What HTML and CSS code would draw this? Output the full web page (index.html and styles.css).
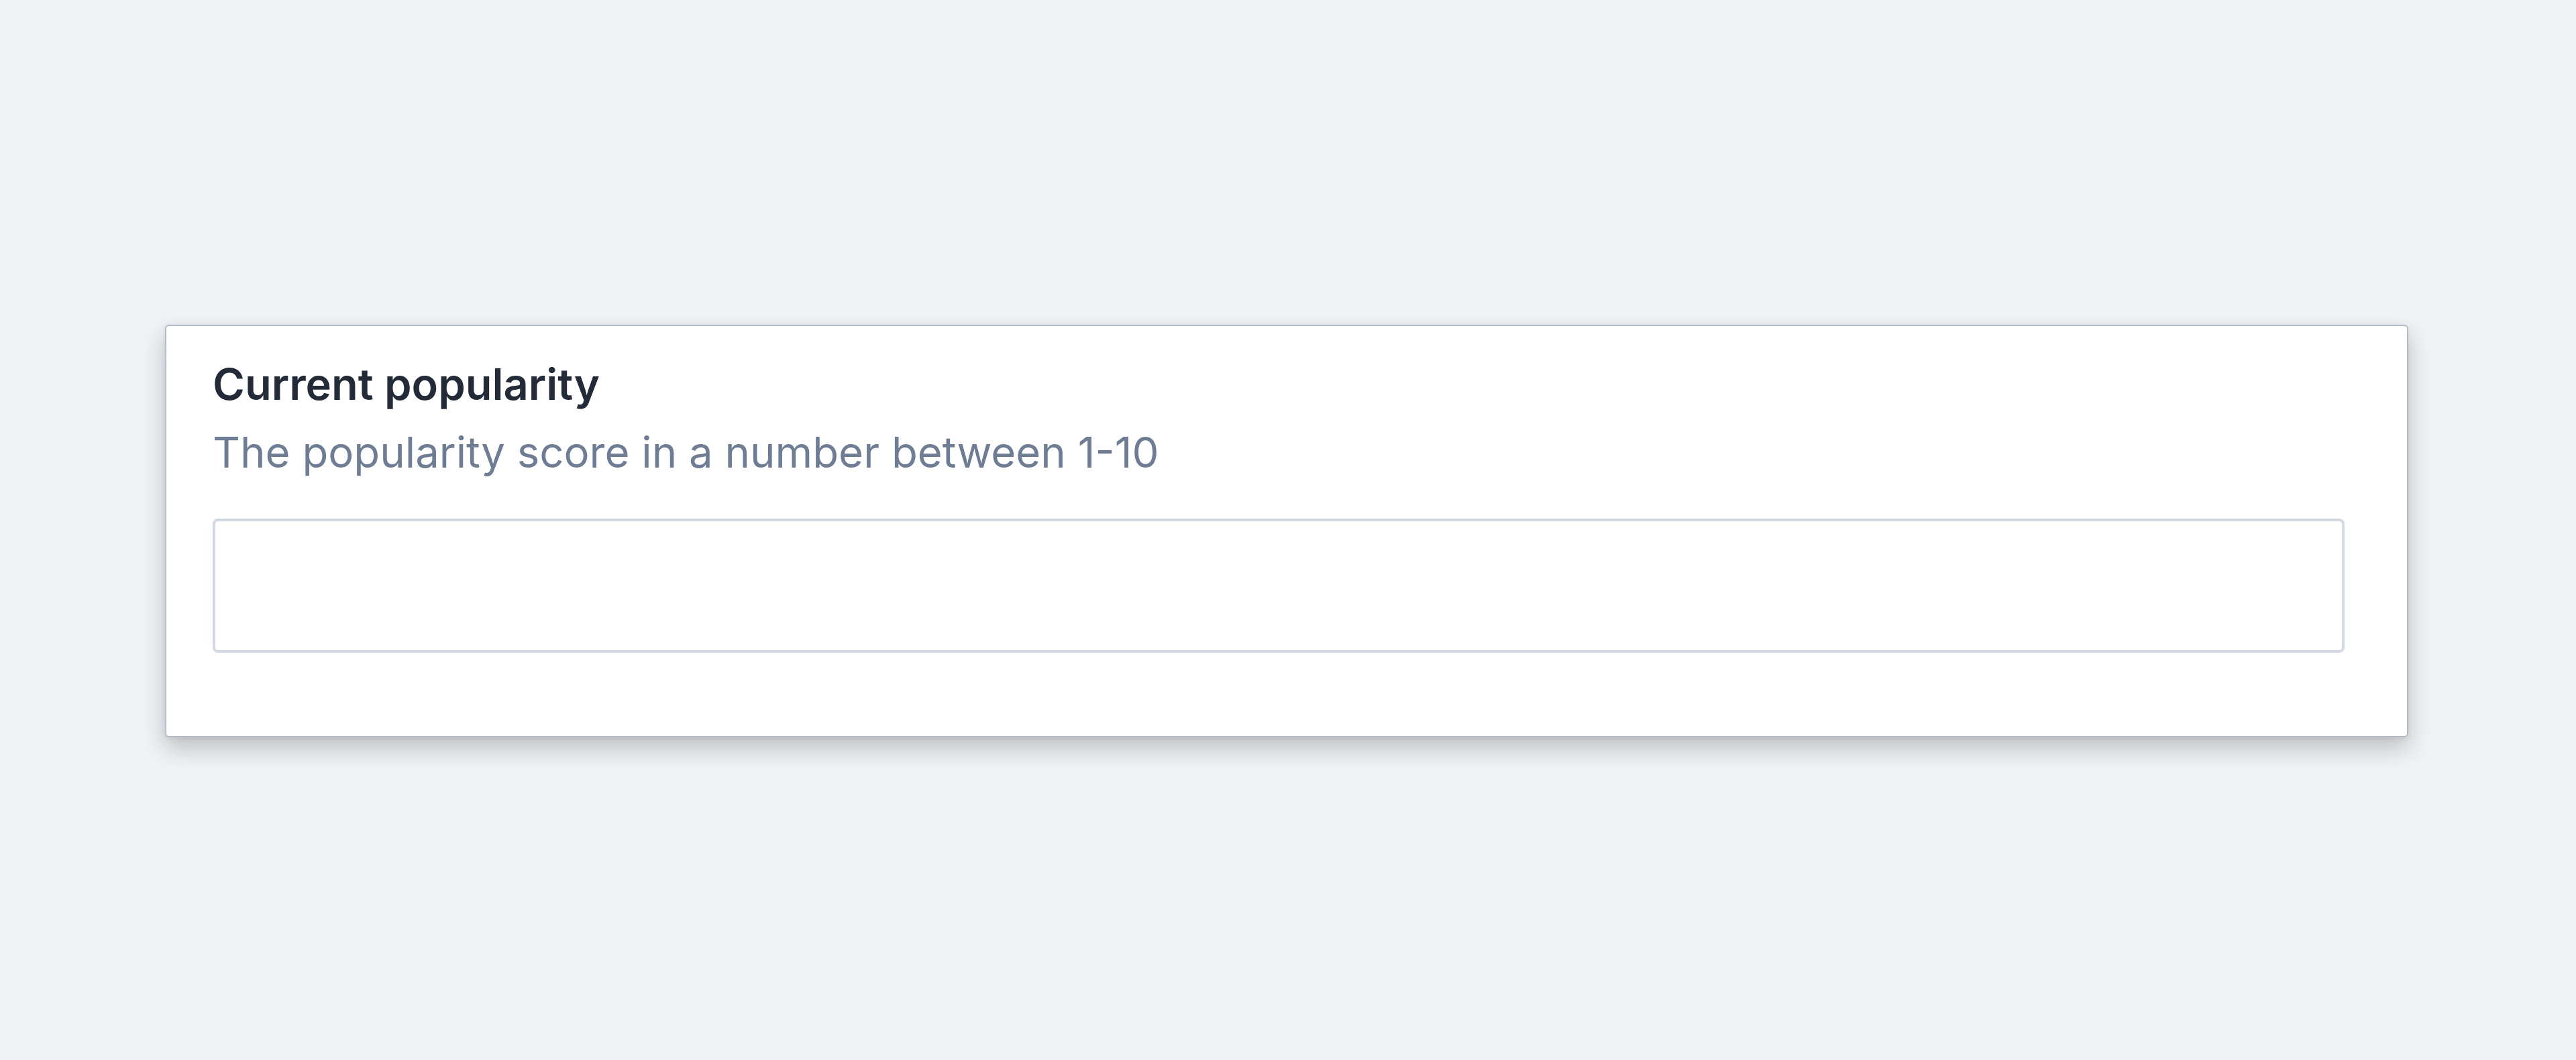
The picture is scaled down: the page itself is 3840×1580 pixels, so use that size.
FILE: index.html
```html
<!DOCTYPE html>
<html lang="en">
<head>
<meta charset="utf-8">
<title>Current popularity</title>
<link rel="stylesheet" href="styles.css">
</head>
<body>
<main class="page">
  <section class="card">
    <label class="field-label" for="popularity">Current popularity</label>
    <p class="field-help">The popularity score in a number between 1-10</p>
    <input class="field-input" id="popularity" type="text">
  </section>
</main>
</body>
</html>
```
FILE: styles.css
```css
html, body {
  margin: 0;
  padding: 0;
  background: #f0f2f5;
  font-family: Inter, "Noto Sans", "Liberation Sans", sans-serif;
}

body {
  min-height: 100vh;
}

.page {
  box-sizing: border-box;
  min-height: 100vh;
  padding: 484px 0 120px 246px;
}

.card {
  box-sizing: border-box;
  width: 3344px;
  height: 615px;
  background: #ffffff;
  border: 2px solid #b0bccb;
  border-radius: 6px;
  box-shadow: 0 16px 34px rgba(30, 30, 35, 0.24), 0 2px 8px rgba(30, 30, 35, 0.06);
  padding: 47px 93px 0 69px;
  display: flex;
  flex-direction: column;
}

.field-label {
  display: block;
  font-size: 65px;
  line-height: 80px;
  font-weight: 600;
  color: #232b38;
}

.field-help {
  margin: 21px 0 0;
  font-size: 63.5px;
  line-height: 80px;
  font-weight: 400;
  color: #6e7d93;
}

.field-input {
  box-sizing: border-box;
  margin-top: 59px;
  width: 100%;
  height: 200px;
  border: 4px solid #d3d9e2;
  border-radius: 8px;
  background: #ffffff;
  outline: none;
  font: inherit;
  font-size: 60px;
  padding: 0 30px;
}
```
